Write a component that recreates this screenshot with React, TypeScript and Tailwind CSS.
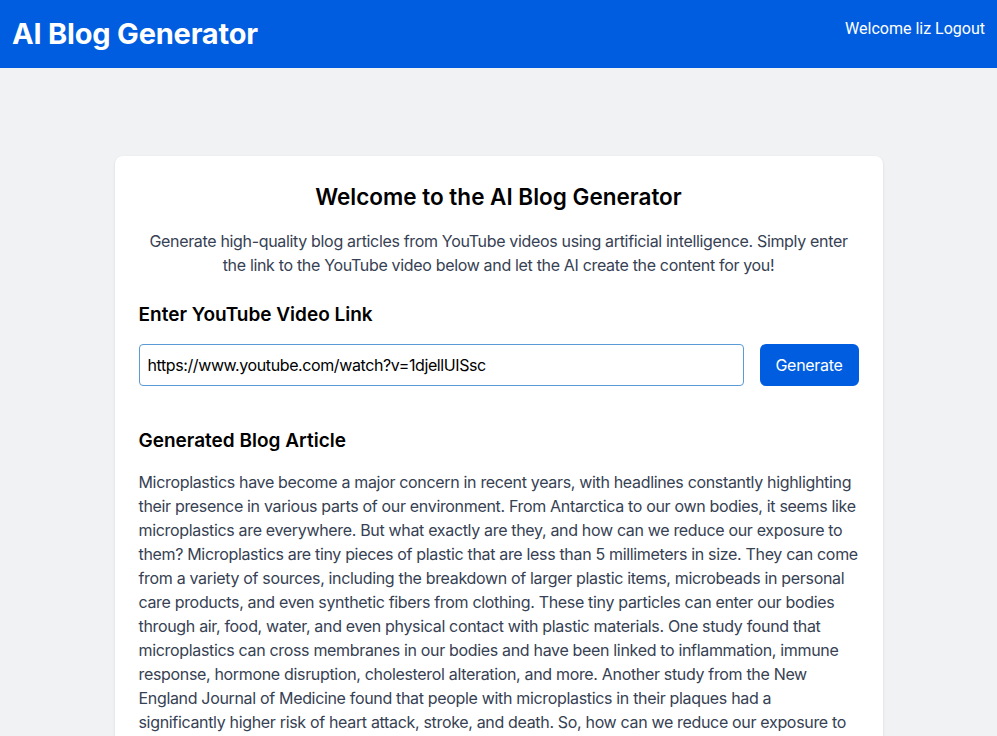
import React from "react";

const lines = [
  "Microplastics have become a major concern in recent years, with headlines constantly highlighting",
  "their presence in various parts of our environment. From Antarctica to our own bodies, it seems like",
  "microplastics are everywhere. But what exactly are they, and how can we reduce our exposure to",
  "them? Microplastics are tiny pieces of plastic that are less than 5 millimeters in size. They can come",
  "from a variety of sources, including the breakdown of larger plastic items, microbeads in personal",
  "care products, and even synthetic fibers from clothing. These tiny particles can enter our bodies",
  "through air, food, water, and even physical contact with plastic materials. One study found that",
  "microplastics can cross membranes in our bodies and have been linked to inflammation, immune",
  "response, hormone disruption, cholesterol alteration, and more. Another study from the New",
  "England Journal of Medicine found that people with microplastics in their plaques had a",
  "significantly higher risk of heart attack, stroke, and death. So, how can we reduce our exposure to",
  "microplastics? There are several simple steps we can take in our daily lives, such as filtering our",
  "drinking water, avoiding plastic food containers, and choosing natural fibers for our clothing.",
];

export default function App() {
  return (
    <div
      className="min-h-screen bg-[#f1f2f4]"
      style={{ fontFamily: "Inter, 'Noto Sans', sans-serif" }}
    >
      <header className="flex h-[68px] items-start justify-between bg-[#005de0] px-3 pt-4 text-white">
        <h1 className="text-[29px] font-bold leading-9 tracking-[-0.2px]">AI Blog Generator</h1>
        <div className="pt-px text-base leading-6" style={{ fontFamily: "Roboto, sans-serif" }}>
          <a>Welcome liz</a> <a>Logout</a>
        </div>
      </header>
      <main className="mx-auto mt-[88px] max-w-3xl rounded-lg bg-white p-6 shadow-sm">
        <h2 className="pt-px text-center text-[22.5px] font-semibold leading-8 text-black">
          Welcome to the AI Blog Generator
        </h2>
        <p className="mt-4 text-center text-base leading-6 tracking-[-0.33px] text-gray-700">
          <span className="block whitespace-nowrap">
            Generate high-quality blog articles from YouTube videos using artificial intelligence. Simply enter
          </span>
          <span className="block whitespace-nowrap">
            the link to the YouTube video below and let the AI create the content for you!
          </span>
        </p>
        <h3 className="mt-6 text-[19px] font-semibold leading-7 text-black">Enter YouTube Video Link</h3>
        <div className="mt-[15px] flex gap-4">
          <input
            className="h-[42px] flex-1 rounded-sm border border-[#5b9bd5] px-2 text-base tracking-[-0.4px] text-black outline-none"
            defaultValue="https://www.youtube.com/watch?v=1djellUISsc"
          />
          <button className="h-[42px] w-[99px] rounded-md bg-[#005de0] text-base tracking-[-0.3px] text-white">
            Generate
          </button>
        </div>
        <h3 className="mt-10 pt-px text-[19px] font-semibold leading-7 text-black">Generated Blog Article</h3>
        <p className="mt-[15px] text-base leading-6 tracking-[-0.33px] text-gray-700">
          {lines.map((l, i) => (
            <span key={i} className="block whitespace-nowrap">
              {l}
            </span>
          ))}
        </p>
      </main>
    </div>
  );
}
